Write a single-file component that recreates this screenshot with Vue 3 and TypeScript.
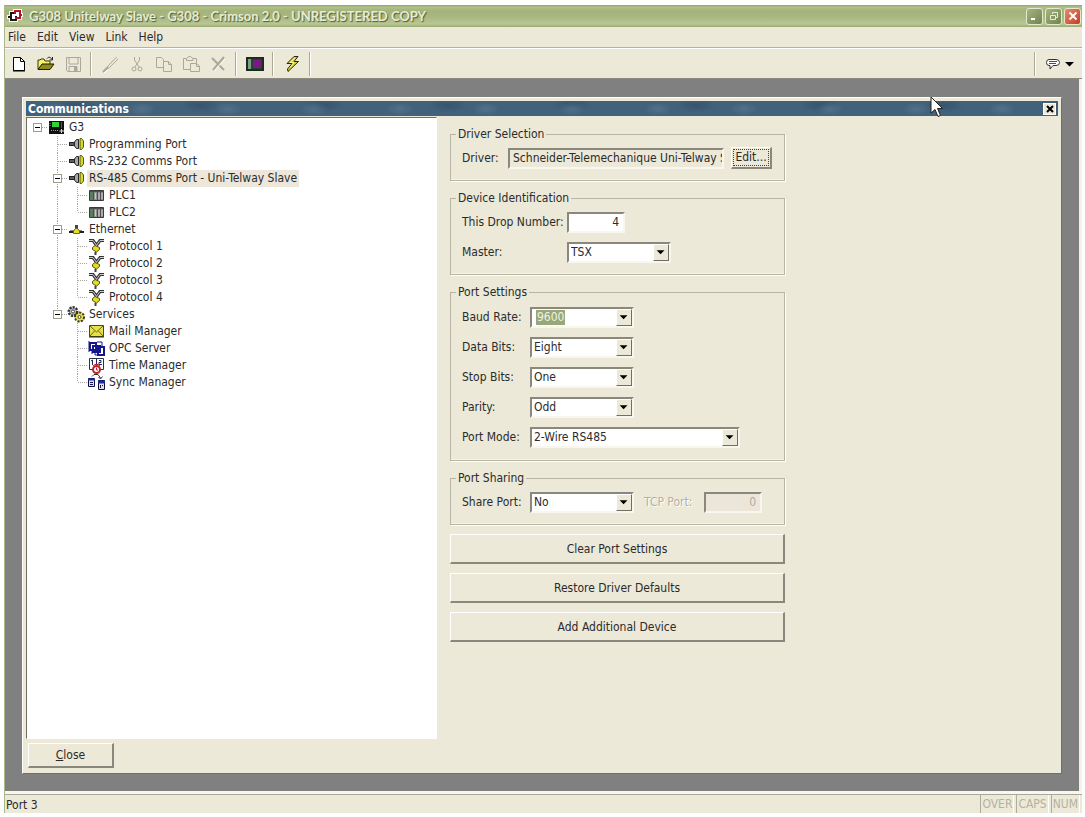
<script setup lang="ts">
import { reactive } from 'vue'

type Guide = 'none' | 'line' | 'tee' | 'end' | 'root' | 'box' | 'boxend'
interface Node {
  label: string
  icon: string
  guides: Guide[]
  selected?: boolean
}

const menus: string[] = ['File', 'Edit', 'View', 'Link', 'Help']

const tools: { icon: string; label: string; disabled?: boolean }[][] = [
  [
    { icon: 'new', label: 'New' },
    { icon: 'open', label: 'Open' },
    { icon: 'save', label: 'Save', disabled: true },
  ],
  [
    { icon: 'pen', label: 'Edit item', disabled: true },
    { icon: 'cut', label: 'Cut', disabled: true },
    { icon: 'copy', label: 'Copy', disabled: true },
    { icon: 'paste', label: 'Paste', disabled: true },
    { icon: 'delete', label: 'Delete', disabled: true },
  ],
  [{ icon: 'panel', label: 'Display' }],
  [{ icon: 'bolt', label: 'Download' }],
]

const nodes: Node[] = [
  { label: 'G3', icon: 'g3', guides: ['root'] },
  { label: 'Programming Port', icon: 'plug', guides: ['none', 'tee'] },
  { label: 'RS-232 Comms Port', icon: 'plug', guides: ['none', 'tee'] },
  { label: 'RS-485 Comms Port - Uni-Telway Slave', icon: 'plug', guides: ['none', 'box'], selected: true },
  { label: 'PLC1', icon: 'plc', guides: ['none', 'line', 'tee'] },
  { label: 'PLC2', icon: 'plc', guides: ['none', 'line', 'end'] },
  { label: 'Ethernet', icon: 'net', guides: ['none', 'box'] },
  { label: 'Protocol 1', icon: 'proto', guides: ['none', 'line', 'tee'] },
  { label: 'Protocol 2', icon: 'proto', guides: ['none', 'line', 'tee'] },
  { label: 'Protocol 3', icon: 'proto', guides: ['none', 'line', 'tee'] },
  { label: 'Protocol 4', icon: 'proto', guides: ['none', 'line', 'end'] },
  { label: 'Services', icon: 'gears', guides: ['none', 'boxend'] },
  { label: 'Mail Manager', icon: 'mail', guides: ['none', 'none', 'tee'] },
  { label: 'OPC Server', icon: 'opc', guides: ['none', 'none', 'tee'] },
  { label: 'Time Manager', icon: 'time', guides: ['none', 'none', 'tee'] },
  { label: 'Sync Manager', icon: 'sync', guides: ['none', 'none', 'end'] },
]

const guidePaths: Record<Guide, string> = {
  none: '',
  line: 'M10.5 0V17',
  tee: 'M10.5 0V17M11 8.5H20',
  end: 'M10.5 0V8M11 8.5H20',
  root: 'M11 8.5H20',
  box: 'M10.5 0V17M11 8.5H20',
  boxend: 'M10.5 0V8M11 8.5H20',
}
const hasBox = (g: Guide): boolean => g === 'root' || g === 'box' || g === 'boxend'

const form = reactive({
  driver: 'Schneider-Telemechanique Uni-Telway Slave',
  drop: '4',
  master: 'TSX',
  share: 'No',
  tcp: '0',
})

const settings = reactive([
  { id: 'baud', label: 'Baud Rate:', value: '9600', options: ['9600', '19200', '38400'] },
  { id: 'data', label: 'Data Bits:', value: 'Eight', options: ['Seven', 'Eight'] },
  { id: 'stop', label: 'Stop Bits:', value: 'One', options: ['One', 'Two'] },
  { id: 'parity', label: 'Parity:', value: 'Odd', options: ['None', 'Odd', 'Even'] },
  { id: 'mode', label: 'Port Mode:', value: '2-Wire RS485', options: ['2-Wire RS485', '4-Wire RS485'] },
])

const actions: string[] = ['Clear Port Settings', 'Restore Driver Defaults', 'Add Additional Device']
</script>

<template>
  <div class="window">
    <header class="titlebar">
      <svg class="logo" width="16" height="16" viewBox="0 0 16 16" fill="none" aria-hidden="true">
        <path d="M0 9H4M4 5H9V12H4ZM8 3H13V10H8ZM12 7H16" stroke="#fff" stroke-width="4" />
        <path d="M1 9H4M8 5H4V12H9V8" stroke="#1c1616" stroke-width="2" />
        <path d="M9 3H13V10H8M13 7H15" stroke="#b3142c" stroke-width="2" />
        <path d="M8 2V6" stroke="#b3142c" stroke-width="2" />
      </svg>
      <h1>G308 Unitelway Slave - G308 - Crimson 2.0 - UNREGISTERED COPY</h1>
      <div class="winbtns">
        <button type="button" aria-label="Minimize">
          <svg width="14" height="14" viewBox="0 0 14 14"><path d="M3 10H7" stroke="#fff" stroke-width="2" /></svg>
        </button>
        <button type="button" aria-label="Restore">
          <svg width="14" height="14" viewBox="0 0 14 14"><path d="M5.500 5V3.500H10.500V8.500H9M3.500 6.500H8.500V10.500H3.500Z" fill="none" stroke="#e6ecd8" /></svg>
        </button>
        <button type="button" class="x" aria-label="Close window">
          <svg width="14" height="14" viewBox="0 0 14 14"><path d="M3.500 3.500L10.500 10.500M10.500 3.500L3.500 10.500" stroke="#fff" stroke-width="2" /></svg>
        </button>
      </div>
    </header>

    <nav class="menubar">
      <button v-for="m in menus" :key="m" type="button">{{ m }}</button>
    </nav>

    <div class="toolbar">
      <template v-for="(group, gi) in tools" :key="gi">
        <button v-for="t in group" :key="t.icon" type="button" :aria-label="t.label" :disabled="t.disabled">
          <svg width="20" height="18" viewBox="0 0 20 18" fill="none">
            <template v-if="t.icon === 'new'">
              <path d="M4.500 2.500H11.500L15.500 6.500V15.500H4.500Z" fill="#fff" stroke="#000" />
              <path d="M11.500 2.500V6.500H15.500M4 16H16" stroke="#000" />
            </template>
            <template v-else-if="t.icon === 'open'">
              <path d="M2 14V5H4L5 4H8L9 6H14V9" fill="#f6f26a" stroke="#33300c" />
              <path d="M2 14.500L6 9H18L14 14.500Z" fill="#8f8b16" stroke="#1d1b02" />
              <path d="M11 3.500C12.500 1.500 15 2 16 4.500M16.500 2V5H13.500" stroke="#222" />
            </template>
            <template v-else-if="t.icon === 'save'">
              <path d="M3.500 2.500H17.500V16.500H4.500L3.500 15.500Z" stroke="#aca899" />
              <path d="M6 3V9H15V3M6 16V11.500H14V16" stroke="#aca899" />
              <path d="M11 12H14V16H11Z" fill="#aca899" />
            </template>
            <template v-else-if="t.icon === 'pen'">
              <path d="M16.500 2L8 11L6 15L9.500 12.500L18 4" stroke="#aca899" />
              <path d="M3 17L8 12" stroke="#aca899" stroke-width="2" />
              <path d="M4 18L9 14" stroke="#fff" />
            </template>
            <template v-else-if="t.icon === 'cut'">
              <path d="M7.500 2V5L12 12M12.500 2V5L8 12" stroke="#aca899" />
              <circle cx="7" cy="14" r="2" stroke="#aca899" />
              <circle cx="13" cy="14" r="2" stroke="#aca899" />
            </template>
            <template v-else-if="t.icon === 'copy'">
              <path d="M2.500 2.500H7.500L9.500 4.500V12.500H2.500Z" stroke="#aca899" />
              <path d="M9.500 6.500H14.500L17.500 9.500V16.500H9.500Z" fill="#ece9d8" stroke="#aca899" />
              <path d="M14.500 6.500V9.500H17.500" stroke="#aca899" />
            </template>
            <template v-else-if="t.icon === 'paste'">
              <path d="M5 3.500H2.500V14.500H9M12 3.500H15.500V8M5.500 5.500V3.500L8 1.500H9.500L12 3.500V5.500Z" stroke="#aca899" />
              <path d="M9.500 8.500H15.500L18.500 11V16.500H9.500Z" fill="#ece9d8" stroke="#aca899" />
              <path d="M15.500 8.500V11.500H18.500" stroke="#aca899" />
            </template>
            <template v-else-if="t.icon === 'delete'">
              <path d="M4 3L16 15M16 2L5 15" stroke="#aca899" stroke-width="2" />
              <path d="M6 16L17 4" stroke="#fff" />
            </template>
            <template v-else-if="t.icon === 'panel'">
              <path d="M2 3H18V15H2Z" fill="#1f4a2c" stroke="#1c2a20" stroke-width="2" />
              <path d="M3 4H6V14H3Z" fill="#7f9c86" />
              <path d="M8 5H16V13H8Z" fill="#7d1685" />
            </template>
            <template v-else>
              <path d="M12 1.500L5 8.500H10L5.500 14L6 16.500L16.500 6.500H12L16 1.500Z" fill="#d9d42c" stroke="#2a2806" />
              <path d="M13 3L8 7.500H12L8 12.500" stroke="#f8f6a0" />
            </template>
          </svg>
        </button>
        <span class="sep"></span>
      </template>
      <span class="grow"></span>
      <span class="sep"></span>
      <button type="button" class="balloon" aria-label="Help topics">
        <svg width="36" height="18" viewBox="0 0 36 18">
          <path d="M6 4.500H13Q16.500 4.500 16.500 7.500T13 10.500H10L7 14V10.500H6Q3.500 10.500 3.500 7.500T6 4.500Z" fill="#fff" stroke="#333" />
          <path d="M6 6.500H14M6 8.500H13" stroke="#4243a8" />
          <path d="M22 7H31L26.500 11.500Z" fill="#000" />
        </svg>
      </button>
    </div>

    <main class="mdi">
      <section class="dialog" aria-label="Communications">
        <div class="caption">
          <h2>Communications</h2>
          <button type="button" aria-label="Close panel">
            <svg width="8" height="8" viewBox="0 0 8 8"><path d="M1 1L7 7M7 1L1 7" stroke="#000" stroke-width="2" /></svg>
          </button>
        </div>
        <div class="panes">
          <ul class="tree">
            <li v-for="n in nodes" :key="n.label">
              <svg v-for="(g, i) in n.guides" :key="i" width="20" height="17" viewBox="0 0 20 17">
                <path :d="guidePaths[g]" fill="none" stroke="#a5a5a5" stroke-dasharray="1 1" />
                <template v-if="hasBox(g)">
                  <rect x="6.500" y="4.500" width="8" height="8" fill="#fff" stroke="#a09c8c" />
                  <path d="M8 8.500H13" stroke="#000" />
                </template>
              </svg>
              <svg class="nodeicon" width="20" height="17" viewBox="0 0 20 17" fill="none">
                <template v-if="n.icon === 'g3'">
                  <path d="M2 2H17V15H2Z" fill="#111" />
                  <path d="M5 3H12V8H5Z" fill="#31d437" />
                  <path d="M3 4V8M14 4H16M14 6H16M14 8H16M4 11.500H12" stroke="#999" stroke-dasharray="1 1" />
                  <path d="M14.500 10V14M12.500 12H17" stroke="#ddd" />
                </template>
                <template v-else-if="n.icon === 'plug'">
                  <path d="M2 7H8M2 9H8" stroke="#222" stroke-width="2" />
                  <path d="M3 8H7" stroke="#999" />
                  <path d="M7.500 6L9.500 3.500H11.500V12.500H9.500L7.500 10Z" fill="#a8a8a8" stroke="#222" />
                  <path d="M13 2.500H14.500L16.500 5V11L14.500 13.500H13Z" fill="#d5d92f" stroke="#55570f" />
                </template>
                <template v-else-if="n.icon === 'plc'">
                  <path d="M2.500 3.500H16.500V13.500H2.500Z" fill="#8f8f8f" stroke="#3a3a3a" />
                  <path d="M3 4H6V13H3Z" fill="#56805c" />
                  <path d="M6.500 4V13M10.500 4V13M13.500 4V13M3 4.500H16" stroke="#4f4f4f" />
                  <path d="M8.500 6V12M12 6V12M15 6V12" stroke="#cfc6cc" />
                </template>
                <template v-else-if="n.icon === 'net'">
                  <path d="M2 11H17" stroke="#222" stroke-width="2" />
                  <path d="M3 9.500H7M12 9.500H15" stroke="#888" />
                  <path d="M9.500 4V8" stroke="#444" stroke-width="3" />
                  <path d="M6.500 12.500V10L8.500 7.500H10.500L12.500 10V12.500Z" fill="#e5df22" stroke="#6c690c" />
                </template>
                <template v-else-if="n.icon === 'proto'">
                  <path d="M2 2.500H6L10 8M17 2.500H13L9 8" stroke="#333" stroke-width="3" />
                  <path d="M2 2.500H6L10 8M17 2.500H13L9 8" stroke="#ccc" />
                  <path d="M5.500 9.500L8 7.500L12.500 9.500V11.500L9.500 14L5.500 11.500Z" fill="#e5dd20" stroke="#55500c" />
                  <path d="M8.500 14V17" stroke="#444" stroke-width="2" />
                </template>
                <template v-else-if="n.icon === 'gears'">
                  <circle cx="6" cy="5.500" r="4" fill="#bbb" stroke="#333" stroke-width="3" stroke-dasharray="2 1" />
                  <circle cx="6" cy="5.500" r="3" fill="#bbb" />
                  <circle cx="6" cy="5.500" r="1.500" fill="#fff" stroke="#444" />
                  <circle cx="12.500" cy="11" r="4" fill="#f0e64a" stroke="#3d3a10" stroke-width="3" stroke-dasharray="2 1" />
                  <circle cx="12.500" cy="11" r="3.500" fill="#ece33b" />
                  <circle cx="12.500" cy="11" r="1.500" fill="#fff" stroke="#444" />
                </template>
                <template v-else-if="n.icon === 'mail'">
                  <path d="M2.500 2.500H16.500V13.500H2.500Z" fill="#e6e04a" stroke="#4d4a0e" />
                  <path d="M3 3L9.500 9L16 3M3 13L7.500 8M16 13L11.500 8" stroke="#6b6612" />
                  <path d="M2 14H17" stroke="#2d2b08" />
                </template>
                <template v-else-if="n.icon === 'opc'">
                  <path d="M3 3H9V10H3ZM6 6H13V12H6ZM11 7H17V15H11Z" stroke="#14148c" stroke-width="2" />
                  <path d="M2 1V12M10 2H15V6M8 12V15H11M5 10V14" stroke="#14148c" />
                </template>
                <template v-else-if="n.icon === 'time'">
                  <path d="M2.500 1.500H16.500V12.500H2.500Z" fill="#fff" stroke="#2a3050" />
                  <path d="M9.500 1V8M5.500 3V8M4 4L5.500 3M12 3.500H14V5.500H12V7.500H15" stroke="#20285e" />
                  <circle cx="9.500" cy="12.500" r="3.500" fill="#fff" stroke="#c2202a" stroke-width="2" />
                  <path d="M6 9L8 7.500H11L13 9" stroke="#c2202a" />
                  <path d="M9.500 10.500V13H11" stroke="#c2202a" />
                </template>
                <template v-else>
                  <path d="M5 2.500L7 0.500H11L13.500 4M15.500 2.500L13.500 5L11.500 3" stroke="#333" />
                  <path d="M1.500 4.500H7.500V12.500H1.500Z" fill="#dfe0ea" stroke="#101040" />
                  <path d="M1 5.500H8" stroke="#1a2a9c" stroke-width="2" />
                  <path d="M3 8.500H6M3 10.500H6" stroke="#14145c" />
                  <path d="M11.500 6.500H17.500V15.500H11.500Z" fill="#dfe0ea" stroke="#101040" />
                  <path d="M11 8H18" stroke="#1a2a9c" stroke-width="3" />
                  <path d="M13.500 11V14M15.500 11V12" stroke="#14145c" />
                </template>
              </svg>
              <span :class="{ selected: n.selected }">{{ n.label }}</span>
            </li>
          </ul>

          <form class="form" @submit.prevent>
            <fieldset>
              <legend>Driver Selection</legend>
              <div class="row">
                <label for="driver" class="w46">Driver:</label>
                <input id="driver" v-model="form.driver" class="driver" type="text" readonly />
                <button type="button" class="edit"><span>Edit...</span></button>
              </div>
            </fieldset>

            <fieldset>
              <legend>Device Identification</legend>
              <div class="row">
                <label for="drop" class="w105">This Drop Number:</label>
                <input id="drop" v-model="form.drop" class="num" type="text" />
              </div>
              <div class="row">
                <label for="master" class="w105">Master:</label>
                <span class="combo">
                  <select id="master" v-model="form.master">
                    <option>TSX</option>
                    <option>Other</option>
                  </select>
                  <svg class="drop" width="16" height="17" viewBox="0 0 16 17"><path d="M3 6H12L7.500 10.500Z" /></svg>
                </span>
              </div>
            </fieldset>

            <fieldset class="settings">
              <legend>Port Settings</legend>
              <div v-for="s in settings" :key="s.id" class="row">
                <label :for="s.id" class="w68">{{ s.label }}</label>
                <span class="combo" :class="s.id">
                  <select :id="s.id" v-model="s.value">
                    <option v-for="o in s.options" :key="o">{{ o }}</option>
                  </select>
                  <svg class="drop" width="16" height="17" viewBox="0 0 16 17"><path d="M3 6H12L7.500 10.500Z" /></svg>
                </span>
              </div>
            </fieldset>

            <fieldset>
              <legend>Port Sharing</legend>
              <div class="row">
                <label for="share" class="w68">Share Port:</label>
                <span class="combo">
                  <select id="share" v-model="form.share">
                    <option>No</option>
                    <option>Yes</option>
                  </select>
                  <svg class="drop" width="16" height="17" viewBox="0 0 16 17"><path d="M3 6H12L7.500 10.500Z" /></svg>
                </span>
                <label for="tcp" class="tcp">TCP Port:</label>
                <input id="tcp" v-model="form.tcp" class="num" type="text" disabled />
              </div>
            </fieldset>

            <button v-for="a in actions" :key="a" type="button" class="action">{{ a }}</button>
          </form>
        </div>
        <div class="foot">
          <button type="button" class="close"><u>C</u>lose</button>
        </div>
      </section>
      <svg class="pointer" width="14" height="22" viewBox="0 0 14 22" aria-hidden="true">
        <path d="M1 1V17L5 13.500L8 20.500L10.500 19.500L7.500 12.500H12.500Z" fill="#fff" stroke="#222" />
      </svg>
    </main>

    <footer class="status">
      <span class="msg">Port 3</span>
      <span class="ind">OVER</span>
      <span class="ind">CAPS</span>
      <span class="ind">NUM</span>
    </footer>
  </div>
</template>

<style>
body {
  background: #fff;
}
</style>

<style scoped>
.window {
  box-sizing: border-box;
  min-height: calc(100vh - 9px);
  margin: 5px 3px 4px 4px;
  border-left: 1px solid #a9b98a;
  background: #ece9d8;
  display: flex;
  flex-direction: column;
  font: 12px/16px 'DejaVu Sans Condensed', 'Noto Sans', sans-serif;
  color: #2b2b2b;
}
button,
input,
select {
  font: inherit;
  color: inherit;
  box-sizing: border-box;
  border-radius: 0;
  margin: 0;
}
.titlebar {
  height: 22px;
  box-sizing: border-box;
  padding: 0 1px 0 2px;
  display: flex;
  align-items: center;
  background: linear-gradient(#8fa067 0, #b3c18c 2px, #a3b37b 6px, #a8b881 12px, #b9c795 19px, #98a873 22px);
}
.titlebar h1 {
  margin: 0;
  padding-left: 6px;
  flex: 1;
  font: bold 13px/20px Lato, 'Open Sans', sans-serif;
  color: #e6ecd6;
  text-shadow: 1px 1px 1px #4f5e30;
  white-space: nowrap;
}
.winbtns {
  display: flex;
  gap: 2px;
}
.winbtns button {
  width: 17px;
  height: 17px;
  padding: 0;
  display: grid;
  place-items: center;
  border: 1px solid #e2e9cf;
  border-radius: 3px;
  background: linear-gradient(135deg, #a5b580, #71834f);
}
.winbtns .x {
  background: linear-gradient(135deg, #e88a6c, #c43d22);
}
.menubar {
  height: 20px;
  display: flex;
  align-items: center;
  padding-left: 3px;
  gap: 11px;
  border-bottom: 1px solid #b5b2a4;
}
.menubar button {
  border: 0;
  padding: 0;
  background: none;
}
.toolbar {
  height: 29px;
  display: flex;
  align-items: center;
  border-top: 1px solid #fff;
  border-bottom: 1px solid #8c8a80;
}
.toolbar button {
  width: 27px;
  height: 26px;
  padding: 0;
  border: 0;
  background: none;
  display: grid;
  place-items: center;
}
.toolbar .balloon {
  width: 42px;
}
.sep {
  width: 10px;
  height: 24px;
  background: linear-gradient(90deg, #aca899 1px, #fff 1px, #fff 2px, transparent 2px) 4px 0 / 6px 24px no-repeat;
}
.grow {
  flex: 1;
}
.mdi {
  position: relative;
  flex: 1;
  display: flex;
  background: #808080;
  border-right: 3px solid #f4f2e8;
  padding: 18px 17px 17px;
}
.dialog {
  flex: 1;
  box-sizing: border-box;
  display: flex;
  flex-direction: column;
  background: #ece9d8;
  border: 1px solid #fff;
  border-right-color: #716f64;
  border-bottom-color: #716f64;
  padding: 3px;
}
.caption {
  height: 15px;
  display: flex;
  align-items: center;
  justify-content: space-between;
  padding: 0 2px;
  background:
    radial-gradient(ellipse 14px 7px at 30px 8px, #5f7f9788, transparent) 0 0 / 86px 15px,
    radial-gradient(ellipse 20px 8px at 50px 4px, #2e4a6288, transparent) 0 0 / 124px 15px,
    #42617b;
}
.caption h2 {
  margin: 0;
  font: bold 12px/16px 'DejaVu Sans Condensed', 'Noto Sans', sans-serif;
  color: #fff;
}
.caption button {
  width: 13px;
  height: 12px;
  padding: 0;
  display: grid;
  place-items: center;
  border: 1px solid #fff;
  background: #ece9d8;
}
.panes {
  flex: 1;
  display: flex;
  gap: 13px;
  padding-top: 1px;
}
.tree {
  flex: 0 0 411px;
  box-sizing: border-box;
  margin: 0;
  padding: 1px 0 0;
  list-style: none;
  background: #fff;
  border: 1px solid #716f64;
  border-right-color: #fff;
  border-bottom-color: #fff;
}
.tree li {
  display: flex;
  height: 17px;
  line-height: 17px;
}
.tree svg {
  flex: none;
}
.tree span {
  padding: 0 2px;
  white-space: nowrap;
}
.tree .selected {
  background: #ece7da;
}
.form {
  width: 335px;
  padding-top: 9px;
  display: flex;
  flex-direction: column;
  gap: 9px;
}
fieldset {
  margin: 0;
  min-width: 0;
  border: 1px solid #b8b4a6;
  box-shadow: 1px 1px 0 #fff, inset 0 -1px 0 #f6f4ea;
  padding: 5px 0 11px 11px;
  display: flex;
  flex-direction: column;
  gap: 8px;
}
.settings {
  padding: 6px 0 12px 11px;
}
legend {
  margin-left: -6px;
  padding: 0 2px;
  line-height: 16px;
}
.row {
  display: flex;
  align-items: center;
  height: 22px;
}
.w46 {
  width: 46px;
}
.w105 {
  width: 105px;
}
.w68 {
  width: 68px;
}
input {
  height: 21px;
  background: #fff;
  border: 2px solid;
  border-color: #8a887c #f8f6ee #f8f6ee #8a887c;
  outline: 0;
  padding: 0 4px;
}
.driver {
  width: 216px;
  background: #ece9d8;
  padding: 0 0 0 3px;
}
.num {
  width: 58px;
  text-align: right;
}
.edit {
  width: 41px;
  height: 22px;
  margin-left: 7px;
  padding: 1px;
}
.edit span {
  display: block;
  border: 1px dotted #444;
  line-height: 15px;
}
.edit,
.action,
.close {
  background: #ece9d8;
  border: 1px solid #fff;
  border-right: 2px solid #8a887c;
  border-bottom: 2px solid #8a887c;
  white-space: nowrap;
}
.action {
  width: 100%;
  height: 30px;
}
.combo {
  position: relative;
  width: 104px;
  height: 21px;
}
.combo.mode {
  width: 210px;
}
.combo select {
  appearance: none;
  width: 100%;
  height: 21px;
  padding: 0 20px 0 2px;
  background: #fff;
  border: 2px solid;
  border-color: #8a887c #f8f6ee #f8f6ee #8a887c;
  outline: 0;
}
.combo.baud select {
  padding-left: 5px;
  color: #eef2e2;
  background: linear-gradient(#99a87a, #99a87a) 4px 1px / 29px 15px no-repeat #fff;
}
.drop {
  position: absolute;
  top: 2px;
  right: 2px;
  box-sizing: border-box;
  background: #ece9d8;
  border: 1px solid #fff;
  border-right-color: #716f64;
  border-bottom-color: #716f64;
  pointer-events: none;
}
.tcp {
  width: 60px;
  margin-left: 10px;
  color: #b5b1a1;
  text-shadow: 1px 1px 0 #fff;
}
input:disabled {
  background: #ece6da;
  color: #b0ac9c;
}
.foot {
  padding: 4px 2px 2px;
}
.close {
  width: 86px;
  height: 25px;
}
.pointer {
  position: absolute;
  top: 17px;
  left: 925px;
}
.status {
  height: 18px;
  margin-top: 3px;
  display: flex;
  gap: 2px;
  padding-right: 2px;
  border-top: 1px solid #aca899;
  box-shadow: 0 -3px 0 #f8f7f0;
}
.msg {
  flex: 1;
  padding-left: 1px;
  line-height: 20px;
}
.ind {
  padding: 0 1px;
  line-height: 19px;
  color: #b5b1a1;
  border-left: 1px solid #b0ac9c;
  border-right: 1px solid #fff;
}
</style>
